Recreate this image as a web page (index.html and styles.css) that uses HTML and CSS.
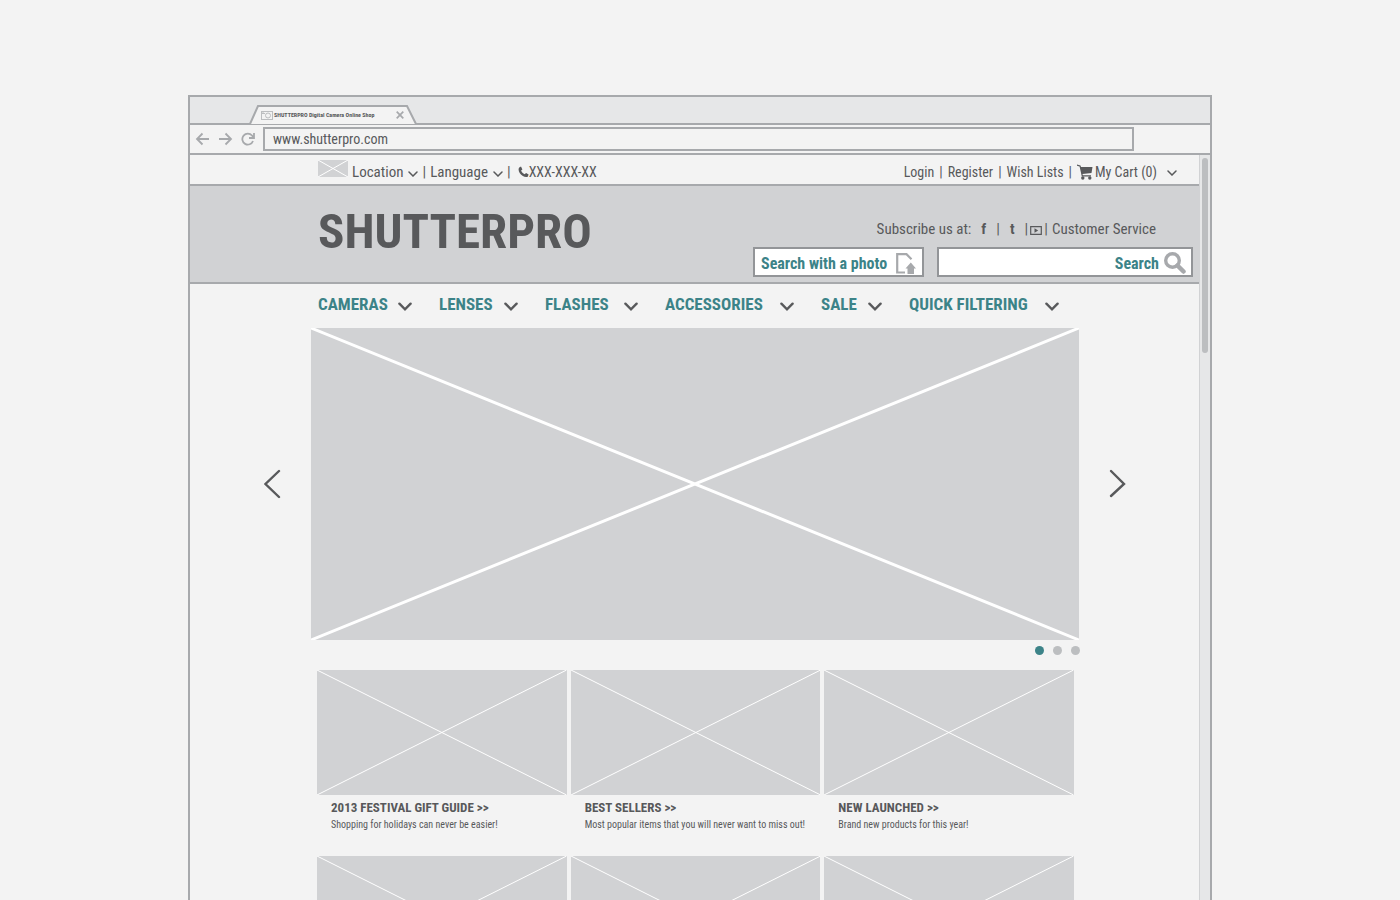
FILE: index.html
```html
<!DOCTYPE html>
<html lang="en">
<head>
<meta charset="utf-8">
<title>SHUTTERPRO Digital Camera Online Shop</title>
<link rel="stylesheet" href="styles.css">
</head>
<body>
<svg class="defs" aria-hidden="true">
  <symbol id="cross" viewBox="0 0 100 100" preserveAspectRatio="none"><path d="M0 0L100 100M100 0L0 100" vector-effect="non-scaling-stroke"/></symbol>
  <symbol id="down" viewBox="0 0 10 6"><path d="M1 1l4 4 4-4" stroke-linecap="round"/></symbol>
</svg>
<div class="window">
  <div class="tabs">
    <div class="tab">
      <svg class="tab-shape" viewBox="0 0 168 20" preserveAspectRatio="none"><path d="M0 19H1L9 1H158L167 19H168" fill="#f3f3f3" stroke="#a7a9ac" stroke-width="2"/></svg>
      <svg class="favicon" viewBox="0 0 12 9" fill="none" stroke="#bcbec0"><rect x=".5" y=".5" width="11" height="8"/><circle cx="7" cy="4.5" r="2.5"/><path d="M1 2.5h3M2 .5v2"/></svg>
      <span class="tab-title">SHUTTERPRO Digital Camera Online Shop</span>
      <button class="icon-button" aria-label="Close tab"><svg width="8" height="8" viewBox="0 0 8 8" stroke="#a7a9ac" stroke-width="1.7"><path d="M.7.7l6.6 6.6M7.3.7L.7 7.3"/></svg></button>
    </div>
  </div>
  <div class="address">
    <button class="icon-button" aria-label="Back"><svg width="15" height="14" viewBox="0 0 15 14" fill="none" stroke="#a7a9ac" stroke-width="1.8"><path d="M14 7H2M7.5 1.5L2 7l5.500 5.500"/></svg></button>
    <button class="icon-button" aria-label="Forward"><svg width="15" height="14" viewBox="0 0 15 14" fill="none" stroke="#a7a9ac" stroke-width="1.8"><path d="M1 7h12M7.500 1.500L13 7l-5.500 5.500"/></svg></button>
    <button class="icon-button" aria-label="Reload"><svg width="14" height="14" viewBox="0 0 14 14" fill="none" stroke="#a7a9ac" stroke-width="1.800"><path d="M12 9A5.500 5.500 0 1 1 11 3.500L12.500 5.500M13 1v5H8"/></svg></button>
    <input class="url" aria-label="Address" value="www.shutterpro.com">
  </div>
  <div class="view">
    <div class="page">
      <div class="utility">
        <div class="group">
          <svg class="flag" aria-hidden="true"><use href="#cross"/></svg>
          <button class="menu">Location <svg class="chev"><use href="#down"/></svg></button>
          <span>|</span>
          <button class="menu">Language <svg class="chev"><use href="#down"/></svg></button>
          <span>|</span>
          <a class="phone" href="#"><svg width="11" height="12" viewBox="0 0 11 12" fill="#58595b"><path d="M1.200 1.400L3 .6l1.400 2.800-1.300 1.100c.7 1.700 1.800 2.900 3.500 3.700l1.500-1.300 2.500 1.700-.7 1.900c-1 1-3.300.7-5.400-.7C1.500 7.900-.5 4 1.200 1.400z"/></svg>XXX-XXX-XX</a>
        </div>
        <div class="group account">
          <a href="#">Login</a><span>|</span><a href="#">Register</a><span>|</span><a href="#">Wish Lists</a><span>|</span>
          <button class="cart"><svg width="16" height="16" viewBox="0 0 16 16" fill="#58595b"><path d="M0 .5l3.500 1L4 3h11.500l-1 6-9 1 .3 1.200H14v1.300H4.800L2.600 2.600 0 1.700z"/><circle cx="5.800" cy="14" r="1.700"/><circle cx="12.800" cy="14" r="1.700"/></svg>My Cart (0)<svg class="chev"><use href="#down"/></svg></button>
        </div>
      </div>
      <header class="masthead">
        <h1>SHUTTERPRO</h1>
        <div class="tools">
          <div class="social">
            <span>Subscribe us at:</span>
            <a class="letter" href="#">f</a><span>|</span><a class="letter" href="#">t</a><span>|</span>
            <a class="video" href="#" aria-label="Video channel"><svg width="12" height="9" viewBox="0 0 12 9"><path d="M.7.700h10.600v7.600H.7z" fill="none" stroke="#58595b" stroke-width="1.200"/><path d="M4.500 2.300v4.400l3.700-2.200z" fill="#58595b"/></svg></a>
            <span>|</span><a class="service" href="#">Customer Service</a>
          </div>
          <form class="searches">
            <button type="button" class="photo">Search with a photo
              <svg width="20" height="21" viewBox="0 0 20 21"><path d="M9 19.500H1.200V1.200h9.300l5 5" fill="none" stroke="#a7a9ac" stroke-width="2.200"/><path d="M14.800 9.500l5.200 6h-2V21h-6.500v-5.500H9.500z" fill="#a7a9ac"/></svg>
            </button>
            <div class="search">
              <input type="text" aria-label="Search" placeholder="Search">
              <button class="icon-button" aria-label="Submit search"><svg width="22" height="22" viewBox="0 0 22 22" fill="none" stroke="#a7a9ac"><circle cx="8.500" cy="8.500" r="6.800" stroke-width="3.400"/><path d="M13.500 13.500l6 6" stroke-width="4.500" stroke-linecap="round"/></svg></button>
            </div>
          </form>
        </div>
      </header>
      <nav class="nav">
        <button>CAMERAS <svg><use href="#down"/></svg></button>
        <button>LENSES <svg><use href="#down"/></svg></button>
        <button>FLASHES <svg><use href="#down"/></svg></button>
        <button>ACCESSORIES <svg><use href="#down"/></svg></button>
        <button>SALE <svg><use href="#down"/></svg></button>
        <button>QUICK FILTERING <svg><use href="#down"/></svg></button>
      </nav>
      <section class="carousel">
        <button class="icon-button" aria-label="Previous"><svg width="18" height="30" viewBox="0 0 18 30" fill="none" stroke="#58595b" stroke-width="2.400" stroke-linecap="round"><path d="M15 2L1.500 15 15 28"/></svg></button>
        <div class="slide">
          <svg class="picture" aria-hidden="true"><use href="#cross"/></svg>
        </div>
        <button class="icon-button" aria-label="Next"><svg width="18" height="30" viewBox="0 0 18 30" fill="none" stroke="#58595b" stroke-width="2.400" stroke-linecap="round"><path d="M3 2l13 13L3 27"/></svg></button>
      </section>
      <div class="dots">
        <button class="current" aria-label="Slide 1"></button><button aria-label="Slide 2"></button><button aria-label="Slide 3"></button>
      </div>
      <main class="cards">
        <article><svg class="picture" aria-hidden="true"><use href="#cross"/></svg><h2><a href="#">2013 FESTIVAL GIFT GUIDE &gt;&gt;</a></h2><p>Shopping for holidays can never be easier!</p></article>
        <article><svg class="picture" aria-hidden="true"><use href="#cross"/></svg><h2><a href="#">BEST SELLERS &gt;&gt;</a></h2><p>Most popular items that you will never want to miss out!</p></article>
        <article><svg class="picture" aria-hidden="true"><use href="#cross"/></svg><h2><a href="#">NEW LAUNCHED &gt;&gt;</a></h2><p>Brand new products for this year!</p></article>
        <article><svg class="picture" aria-hidden="true"><use href="#cross"/></svg></article>
        <article><svg class="picture" aria-hidden="true"><use href="#cross"/></svg></article>
        <article><svg class="picture" aria-hidden="true"><use href="#cross"/></svg></article>
      </main>
    </div>
    <div class="scrollbar"><div class="thumb"></div></div>
  </div>
</div>
</body>
</html>
```
FILE: styles.css
```css
:root {
  --ink: #58595b;
  --teal: #3c8388;
  --line: #a7a9ac;
  --fill: #d1d2d4;
  --paper: #f3f3f3;
}
* { box-sizing: border-box; }
body {
  margin: 0;
  height: 100vh;
  padding: 95px 16px 0;
  overflow: hidden;
  background: var(--paper);
  color: var(--ink);
  font: 15px/20px "Roboto Condensed", Roboto, "Liberation Sans", sans-serif;
}
a { color: inherit; text-decoration: none; }
button { padding: 0; border: 0; background: none; color: inherit; font: inherit; cursor: pointer; }
svg { display: block; flex: none; }
.defs { position: absolute; width: 0; height: 0; }
.icon-button { display: flex; flex: none; }

.window {
  display: flex;
  flex-direction: column;
  max-width: 1024px;
  height: 100%;
  margin: 0 auto;
  overflow: hidden;
  border: 2px solid var(--line);
  border-bottom: 0;
}
.tabs {
  display: flex;
  flex: none;
  align-items: flex-end;
  height: 28px;
  padding-left: 59px;
  background: #e6e7e8;
  border-bottom: 2px solid var(--line);
}
.tab {
  position: relative;
  display: flex;
  align-items: center;
  width: 168px;
  height: 20px;
  margin-bottom: -2px;
  padding: 0 13px 0 12px;
}
.tab-shape { position: absolute; inset: 0; width: 100%; height: 100%; }
.favicon, .tab-title, .tab .icon-button { position: relative; }
.favicon { width: 12px; height: 9px; }
.tab-title { flex: 1; margin-left: 1px; font-size: 6px; line-height: 8px; font-weight: 700; white-space: nowrap; }
.address {
  display: flex;
  flex: none;
  align-items: center;
  gap: 8px;
  height: 30px;
  padding: 0 76px 0 5px;
  border-bottom: 2px solid var(--line);
}
.url {
  flex: 1;
  height: 24px;
  padding: 0 8px;
  border: 2px solid var(--line);
  background: var(--paper);
  color: var(--ink);
  font: inherit;
  font-size: 14px;
}

.view { display: flex; flex: 1; min-height: 0; }
.page { flex: 1; min-width: 0; overflow: hidden; }
.scrollbar { flex: none; width: 11px; padding: 3px 2px; border-left: 1px solid var(--fill); background: #e6e7e8; }
.thumb { width: 6px; height: 195px; border-radius: 3px; background: #bcbec0; }

.utility {
  display: flex;
  align-items: center;
  justify-content: space-between;
  height: 31px;
  padding: 4px 22px 0 128px;
  border-bottom: 2px solid var(--line);
  white-space: nowrap;
}
.group, .menu, .phone, .cart { display: flex; align-items: center; gap: 4px; }
.menu { gap: 5px; }
.flag { width: 30px; height: 17px; margin-top: -6px; background: var(--fill); stroke: #fff; }
.chev { width: 10px; height: 6px; margin-top: 4px; fill: none; stroke: var(--ink); stroke-width: 1.5; }
.phone { gap: 0; margin-left: 3px; font-size: 14px; }
.account { gap: 5px; font-size: 14px; }
.cart { gap: 2px; }
.cart .chev { margin: 2px 0 0 8px; }

.masthead {
  display: flex;
  justify-content: space-between;
  height: 98px;
  padding: 0 6px 0 128px;
  background: var(--fill);
  border-bottom: 2px solid var(--line);
}
h1 { margin: 18px 0 0; font-size: 49px; line-height: 56px; }
.tools { display: flex; flex-direction: column; align-items: flex-end; padding-top: 33px; }
.social { display: flex; gap: 2px; padding-right: 37px; white-space: nowrap; }
.letter { padding: 0 8px; font-weight: 700; }
.video { display: flex; align-items: center; padding-top: 2px; }
.service { padding-left: 2px; }
.searches { display: flex; gap: 13px; margin-top: 8px; color: var(--teal); }
.photo, .search { display: flex; align-items: center; height: 30px; border: 2px solid #939598; background: #fff; }
.photo, .search input { font-size: 16px; font-weight: 700; }
.photo { width: 171px; justify-content: space-between; padding: 3px 6px 0; white-space: nowrap; }
.search { width: 256px; padding: 2px 5px 0 0; }
.search input {
  flex: 1;
  min-width: 0;
  padding: 0 5px;
  border: 0;
  background: none;
  color: var(--teal);
  font-family: inherit;
  text-align: right;
}
.search input::placeholder { color: var(--teal); opacity: 1; }

.nav {
  display: grid;
  grid-template-columns: 94fr 79fr 93fr 129fr 61fr 150fr;
  column-gap: 27px;
  height: 44px;
  padding: 0 140px 4px 128px;
  color: var(--teal);
}
.nav button { display: flex; align-items: center; justify-content: space-between; font-size: 17px; font-weight: 700; white-space: nowrap; }
.nav svg { width: 14px; height: 9px; margin-top: 4px; fill: none; stroke: var(--ink); stroke-width: 1.7; }

.picture { width: 100%; background: var(--fill); stroke: #fff; }
.carousel { display: flex; align-items: center; gap: 29px; padding: 0 73px 0 74px; }
.slide { flex: 1; }
.slide .picture { height: 312px; stroke-width: 3; }
.dots { display: flex; justify-content: flex-end; gap: 9px; padding: 6px 119px 0 0; }
.dots button { width: 9px; height: 9px; border-radius: 50%; background: #bcbec0; }
.dots .current { background: var(--teal); }
.cards { display: grid; grid-template-columns: repeat(3, 1fr); gap: 24px 4px; padding: 15px 125px 0 127px; }
.cards .picture { height: 125px; }
h2, .cards p { margin: 0; padding-left: 14px; white-space: nowrap; }
h2 { padding-top: 3px; font-size: 13px; line-height: 20px; }
.cards p { font-size: 10px; line-height: 14px; }
```
